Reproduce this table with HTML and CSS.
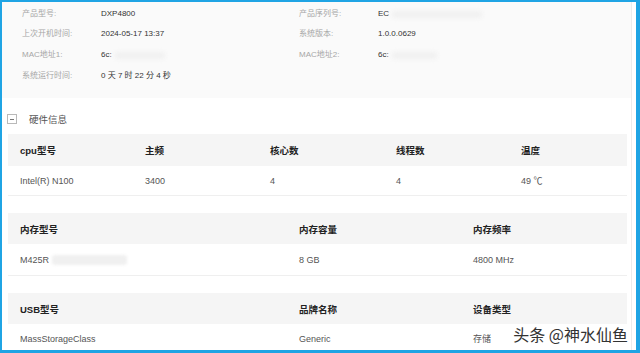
FILE: index.html
```html
<!DOCTYPE html>
<html lang="zh">
<head>
<meta charset="utf-8">
<link rel="stylesheet" href="styles.css">
</head>
<body>
<div class="frame">
  <div class="page">
    <section class="info">
      <div class="lbl">产品型号:</div><div class="val">DXP4800</div>
      <div class="lbl">产品序列号:</div><div class="val">EC<span class="blur w90"></span></div>
      <div class="lbl">上次开机时间:</div><div class="val">2024-05-17 13:37</div>
      <div class="lbl">系统版本:</div><div class="val">1.0.0.0629</div>
      <div class="lbl">MAC地址1:</div><div class="val">6c:<span class="blur w60"></span></div>
      <div class="lbl">MAC地址2:</div><div class="val">6c:<span class="blur w50"></span></div>
      <div class="lbl">系统运行时间:</div><div class="val">0 天 7 时 22 分 4 秒</div>
    </section>

    <div class="section-title">
      <span class="toggle"></span>
      <span class="title-text">硬件信息</span>
    </div>

    <div class="table t5">
      <div class="row head">
        <div>cpu型号</div><div>主频</div><div>核心数</div><div>线程数</div><div>温度</div>
      </div>
      <div class="row body">
        <div>Intel(R) N100</div><div>3400</div><div>4</div><div>4</div><div>49 ℃</div>
      </div>
    </div>

    <div class="table t3 mem">
      <div class="row head">
        <div>内存型号</div><div>内存容量</div><div>内存频率</div>
      </div>
      <div class="row body">
        <div>M425R<span class="blur box w75"></span></div><div>8 GB</div><div>4800 MHz</div>
      </div>
    </div>

    <div class="table t3 usb">
      <div class="row head">
        <div>USB型号</div><div>品牌名称</div><div>设备类型</div>
      </div>
      <div class="row body">
        <div>MassStorageClass</div><div>Generic</div><div>存储</div>
      </div>
    </div>
  </div>
  <div class="watermark">头条 @神水仙鱼</div>
</div>
</body>
</html>
```

FILE: styles.css
```css
* { box-sizing: border-box; }
html, body { margin: 0; padding: 0; }
body {
  width: 640px;
  height: 353px;
  overflow: hidden;
  font-family: "Liberation Sans", "Noto Sans CJK SC", sans-serif;
  background: #fff;
}
.frame {
  position: relative;
  width: 640px;
  height: 353px;
  border-style: solid;
  border-color: #1fa4e4;
  border-width: 2px 4px 3px 2px;
  overflow: hidden;
  background: #fff;
}
.page {
  height: 100%;
  border-right: 1px solid #ececec;
  margin-right: 4px;
}
.info {
  display: grid;
  grid-template-columns: 79px 198px 79px 1fr;
  grid-auto-rows: 20.7px;
  padding: 1.8px 0 0 20px;
  height: 96px;
  background: #fafafa;
  font-size: 8px;
  line-height: 20.7px;
}
.lbl { color: #a6a6a6; white-space: nowrap; }
.val { color: #333; white-space: nowrap; display: flex; align-items: center; }
.blur {
  display: inline-block;
  height: 7px;
  margin-left: 3px;
  background: #f0f0f0;
  filter: blur(2px);
  border-radius: 3px;
}
.blur.box { height: 10px; background: #f0f0f0; filter: blur(1.5px); }
.w90 { width: 90px; }
.w60 { width: 50px; }
.w50 { width: 45px; }
.w75 { width: 75px; }

.section-title {
  display: flex;
  align-items: center;
  height: 36px;
  padding: 6px 0 0 5px;
}
.toggle {
  position: relative;
  width: 10px;
  height: 10px;
  border: 1px solid #b9b9b9;
  background: #fff;
}
.toggle::after {
  content: "";
  position: absolute;
  left: 2px;
  right: 2px;
  top: 3.5px;
  height: 1px;
  background: #777;
}
.title-text {
  margin-left: 12px;
  font-size: 9.5px;
  color: #555;
}

.table { margin: 0 4px 0 6px; }
.row { display: grid; align-items: center; }
.t5 .row { grid-template-columns: 125px 125px 126px 125px 1fr; }
.t3 .row { grid-template-columns: 279px 174px 1fr; }
.row > div { padding-left: 12px; white-space: nowrap; display: flex; align-items: center; }
.head {
  height: 32px;
  background: #f5f5f5;
  font-size: 9.5px;
  font-weight: bold;
  color: #222;
}
.body {
  height: 30px;
  background: #fff;
  border-bottom: 1px solid #efefef;
  font-size: 9px;
  color: #555;
}
.mem { margin-top: 17px; }
.mem .head { height: 31px; }
.mem .body { height: 32px; }
.usb { margin-top: 17px; }
.usb .head { height: 31px; }

.watermark {
  position: absolute;
  right: 8px;
  bottom: 6px;
  font-family: "Noto Sans CJK SC", sans-serif;
  font-size: 16px;
  line-height: 20px;
  color: #333;
  text-shadow: 0 0 2px #fff, 0 0 3px #fff;
}
```
